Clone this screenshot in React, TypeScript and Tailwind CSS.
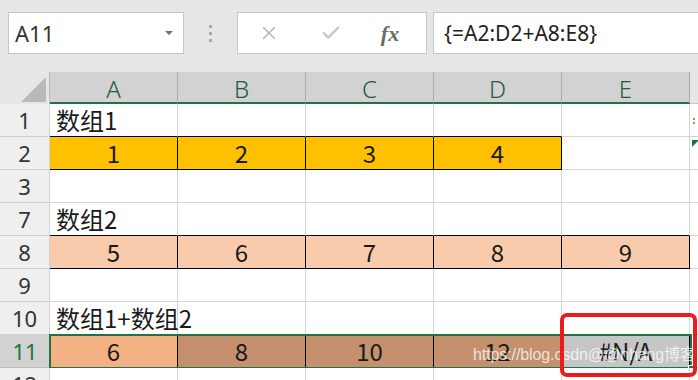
import { X, Check } from 'lucide-react'

type Cell = { text?: string; bg?: string; align?: 'left' | 'center' }

// 表格数据，null 表示空白单元格
const rows: { label: string; active?: boolean; cells: (Cell | null)[] }[] = [
  { label: '1', cells: [{ text: '数组1', align: 'left' }, null, null, null, null] },
  {
    label: '2',
    cells: [
      { text: '1', bg: 'bg-[#ffc000]' },
      { text: '2', bg: 'bg-[#ffc000]' },
      { text: '3', bg: 'bg-[#ffc000]' },
      { text: '4', bg: 'bg-[#ffc000]' },
      null,
    ],
  },
  { label: '3', cells: [null, null, null, null, null] },
  { label: '7', cells: [{ text: '数组2', align: 'left' }, null, null, null, null] },
  {
    label: '8',
    cells: [
      { text: '5', bg: 'bg-[#f8cbad]' },
      { text: '6', bg: 'bg-[#f8cbad]' },
      { text: '7', bg: 'bg-[#f8cbad]' },
      { text: '8', bg: 'bg-[#f8cbad]' },
      { text: '9', bg: 'bg-[#f8cbad]' },
    ],
  },
  { label: '9', cells: [null, null, null, null, null] },
  { label: '10', cells: [{ text: '数组1+数组2', align: 'left' }, null, null, null, null] },
  {
    label: '11',
    active: true,
    cells: [
      { text: '6', bg: 'bg-[#f4b183]' },
      { text: '8', bg: 'bg-[#c4906e]' },
      { text: '10', bg: 'bg-[#c4906e]' },
      { text: '12', bg: 'bg-[#c4906e]' },
      { text: '#N/A', bg: 'bg-[#c6c6c6]' },
    ],
  },
  { label: '12', cells: [null, null, null, null, null] },
]

const cols = ['A', 'B', 'C', 'D', 'E']

function isColored(r: number, c: number) {
  const row = rows[r]
  if (!row) return false
  return !!row.cells[c]?.bg
}

function App() {
  return (
    <div className="relative w-[698px] h-[380px] overflow-hidden bg-white font-['Noto_Sans',sans-serif]">
      {/* 顶部编辑栏 */}
      <div className="h-[72px] bg-[#e6e6e6] flex items-start pt-[12px] pl-[8px]">
        <div className="w-[176px] h-[42px] bg-white border border-[#c6c6c6] flex items-center justify-between pl-[6px] pr-[10px]">
          <span className="text-[22px] text-[#333] leading-none">A11</span>
          <span className="w-0 h-0 border-l-[4px] border-r-[4px] border-t-[4px] border-l-transparent border-r-transparent border-t-[#707070]" />
        </div>
        <div className="w-[53px] h-[42px] flex flex-col items-center justify-center gap-[4px]">
          <span className="w-[3px] h-[3px] bg-[#a8a8a8]" />
          <span className="w-[3px] h-[3px] bg-[#a8a8a8]" />
          <span className="w-[3px] h-[3px] bg-[#a8a8a8]" />
        </div>
        <div className="w-[190px] h-[42px] bg-white border border-[#c6c6c6] flex items-center">
          <div className="w-[62px] flex justify-center">
            <X size={22} strokeWidth={1.6} className="text-[#b4b4b4]" />
          </div>
          <div className="w-[62px] flex justify-center">
            <Check size={22} strokeWidth={2.6} className="text-[#c8c8c8]" />
          </div>
          <div className="w-[56px] flex justify-center">
            <span className="text-[22px] italic font-bold text-[#6a6a6a] font-['Liberation_Serif',serif]">fx</span>
          </div>
        </div>
        <div className="ml-[6px] flex-1 h-[42px] bg-white border border-[#c6c6c6] border-r-0 flex items-center pl-[10px]">
          <span className="text-[21px] text-[#222] leading-none">{'{=A2:D2+A8:E8}'}</span>
        </div>
      </div>

      {/* 列标题 */}
      <div className="flex h-[32px]">
        <div className="w-[50px] h-full bg-[#e6e6e6] border-r border-[#bdbdbd] relative">
          <svg className="absolute right-[3px] bottom-[2px]" width="25" height="25" viewBox="0 0 25 25">
            <polygon points="25,0 25,25 0,25" fill="#b9b9b9" />
          </svg>
        </div>
        {cols.map((c) => (
          <div
            key={c}
            className="w-[128px] h-full bg-[#d2d2d2] border-r border-[#ababab] border-b-[2px] border-b-[#217346] flex items-center justify-center text-[24px] font-light text-[#1f5c3e] leading-none pt-[3px]"
          >
            {c}
          </div>
        ))}
        <div className="flex-1 h-full bg-[#e6e6e6] border-b border-[#c6c6c6]" />
      </div>

      {/* 表格行 */}
      {rows.map((row, r) => (
        <div key={row.label} className="relative flex h-[33px]">
          <div
            className={
              row.active
                ? 'w-[50px] h-full bg-[#d2d2d2] border-b border-[#bdbdbd] flex items-center justify-center text-[22px] text-[#217346] leading-none'
                : 'w-[50px] h-full bg-[#efefef] border-b border-r border-[#d0d0d0] flex items-center justify-center text-[22px] text-[#333] leading-none'
            }
          >
            {row.label}
          </div>
          {row.cells.map((cell, c) => {
            const colored = isColored(r, c)
            const bBlack = colored || isColored(r + 1, c)
            const rBlack = colored || isColored(r, c + 1)
            return (
              <div
                key={c}
                className={[
                  'w-[128px] h-full border-b border-r flex items-center text-[24px] leading-none text-[#1a1a1a] font-["Noto_Sans_CJK_SC","Noto_Sans",sans-serif]',
                  cell?.bg ?? 'bg-white',
                  bBlack ? 'border-b-black' : 'border-b-[#d4d4d4]',
                  rBlack ? 'border-r-black' : 'border-r-[#d4d4d4]',
                  cell?.align === 'left' ? 'justify-start pl-[6px] whitespace-nowrap' : 'justify-center',
                ].join(' ')}
              >
                {cell?.text && <span className={cell.align === 'left' ? 'relative z-10' : ''}>{cell.text}</span>}
              </div>
            )
          })}
          <div className="flex-1 h-full bg-white border-b border-[#d4d4d4] relative">
            {row.label === '2' && (
              <svg className="absolute left-[2px] top-[3px]" width="7" height="7" viewBox="0 0 7 7">
                <polygon points="0,0 7,0 0,7" fill="#1e7145" />
              </svg>
            )}
            {row.label === '1' && (
              <div className="absolute left-[3px] top-[14px] flex flex-col gap-[2px]">
                <span className="w-[2px] h-[2px] bg-[#d08040]" />
                <span className="w-[2px] h-[2px] bg-[#d08040]" />
              </div>
            )}
          </div>
          {row.active && (
            <div className="absolute left-[49px] top-[-1px] w-[643px] h-[35px] border-[2px] border-[#217346] pointer-events-none">
              <div className="absolute right-[-5px] bottom-[-5px] w-[7px] h-[7px] bg-[#217346] border border-white" />
            </div>
          )}
        </div>
      ))}

      {/* 水印 */}
      <div className="absolute left-[473px] top-[347px] text-[16px] tracking-[-0.1px] text-white/75 font-['Liberation_Sans','Noto_Sans_CJK_SC',sans-serif] whitespace-nowrap leading-none">
        https://blog.csdn@@nhang博客
      </div>

      {/* 红色标注框 */}
      <div className="absolute left-[560px] top-[313px] w-[137px] h-[64px] border-[4px] border-[#ec1c1c] rounded-[7px]" />
    </div>
  )
}

export default App
